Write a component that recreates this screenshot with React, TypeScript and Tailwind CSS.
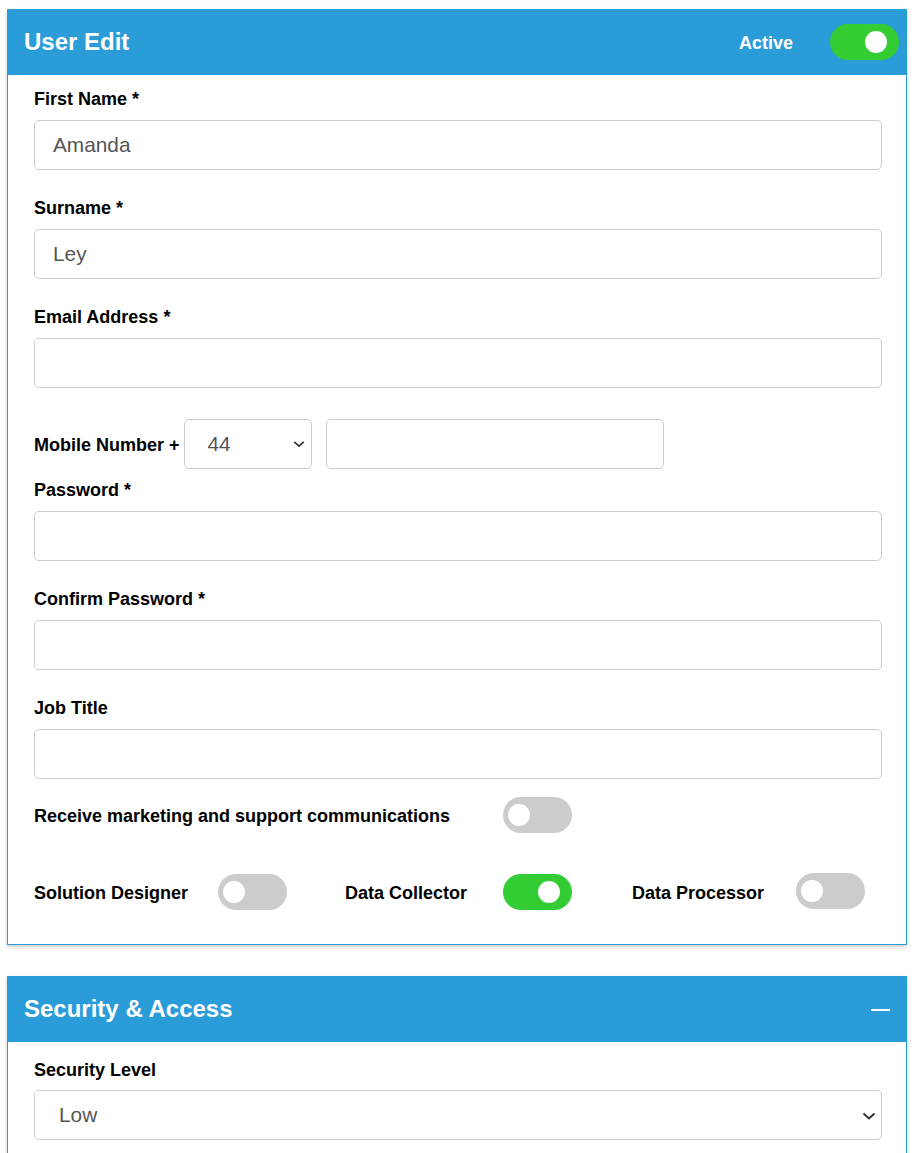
import { useState } from "react";

const font = { fontFamily: '"Liberation Sans", Arial, sans-serif' };

function Toggle({ on, onChange }: { on: boolean; onChange?: () => void }) {
  return (
    <button
      type="button"
      onClick={onChange}
      className={`relative shrink-0 w-[69px] h-[36px] rounded-full ${on ? "bg-[#33cc33]" : "bg-[#cccccc]"}`}
    >
      <span
        className={`absolute top-[7px] w-[22px] h-[22px] rounded-full bg-white ${on ? "left-[35px]" : "left-[5px]"}`}
      />
    </button>
  );
}

function Chevron({ w }: { w: number }) {
  return (
    <svg width={w} height={8} viewBox="0 0 14 8" fill="none" className="pointer-events-none">
      <path d="M1.5 1.5 L7 6.5 L12.5 1.5" stroke="#333" strokeWidth="2" />
    </svg>
  );
}

function Label({ children, className = "" }: { children: React.ReactNode; className?: string }) {
  return <label className={`block text-[18px] leading-[18px] font-bold text-black ${className}`}>{children}</label>;
}

function Field({ label, value = "", type = "text", mb = "mb-[28px]" }: { label: string; value?: string; type?: string; mb?: string }) {
  return (
    <div className={mb}>
      <Label className="pt-[1px] mb-[12px]">{label}</Label>
      <input
        type={type}
        defaultValue={value}
        className="block w-full h-[50px] border border-[#cccccc] rounded-[5px] px-[18px] text-[20.8px] text-[#555] outline-none"
      />
    </div>
  );
}

export default function App() {
  const [active, setActive] = useState(true);
  const [marketing, setMarketing] = useState(false);
  const [roles, setRoles] = useState({ designer: false, collector: true, processor: false });

  return (
    <div className="min-h-screen bg-white pt-[9px] pl-[7px] pb-[40px]" style={font}>
      {/* User edit panel */}
      <section className="w-[900px] shadow-[0_2px_4px_rgba(0,0,0,0.2)]">
        <div className="h-[66px] bg-[#2a9cd8] flex items-center justify-between pl-[17px] pr-[8px]">
          <h1 className="text-[24px] font-bold text-white">User Edit</h1>
          <div className="flex items-center gap-[37px]">
            <span className="text-[18px] font-bold text-white mt-[3px]">Active</span>
            <Toggle on={active} onChange={() => setActive(!active)} />
          </div>
        </div>

        <div className="border-x border-b border-[#2a9cd8] pl-[26px] pr-[24px] pt-[14px] pb-[34px]">
          <Field label="First Name *" value="Amanda" />
          <Field label="Surname *" value="Ley" />
          <Field label="Email Address *" type="email" mb="mb-[31px]" />

          {/* Mobile number */}
          <div className="flex items-center h-[50px] mb-[11px]">
            <Label className="mr-[4px] pt-[1px]">Mobile Number +</Label>
            <div className="relative w-[128px] h-[50px] mr-[14px]">
              <select
                defaultValue="44"
                className="appearance-none w-full h-full border border-[#cccccc] rounded-[5px] pl-[23px] text-[20.8px] text-[#555] bg-white outline-none"
              >
                <option>44</option>
                <option>1</option>
                <option>33</option>
              </select>
              <span className="absolute right-[7px] top-[21px] flex">
                <Chevron w={12} />
              </span>
            </div>
            <input className="w-[338px] h-[50px] border border-[#cccccc] rounded-[5px] px-[18px] text-[20.8px] text-[#555] outline-none" />
          </div>

          <Field label="Password *" type="password" />
          <Field label="Confirm Password *" type="password" />
          <Field label="Job Title" mb="mb-[18px]" />

          <div className="flex items-center h-[36px] mb-[41px]">
            <Label className="w-[469px] pt-[2px]">Receive marketing and support communications</Label>
            <Toggle on={marketing} onChange={() => setMarketing(!marketing)} />
          </div>

          <div className="flex items-center h-[36px]">
            <div className="w-[311px] flex items-center">
              <Label className="w-[184px] pt-[2px]">Solution Designer</Label>
              <Toggle on={roles.designer} onChange={() => setRoles({ ...roles, designer: !roles.designer })} />
            </div>
            <div className="w-[287px] flex items-center">
              <Label className="w-[158px] pt-[2px]">Data Collector</Label>
              <Toggle on={roles.collector} onChange={() => setRoles({ ...roles, collector: !roles.collector })} />
            </div>
            <div className="flex items-center">
              <Label className="w-[164px] pt-[2px]">Data Processor</Label>
              <div className="-mt-[2px] flex">
                <Toggle on={roles.processor} onChange={() => setRoles({ ...roles, processor: !roles.processor })} />
              </div>
            </div>
          </div>
        </div>
      </section>

      {/* Security panel */}
      <section className="w-[900px] mt-[31px] shadow-[0_2px_4px_rgba(0,0,0,0.2)]">
        <div className="h-[66px] bg-[#2a9cd8] flex items-center justify-between pl-[17px] pr-[17px]">
          <h2 className="text-[24px] font-bold text-white">Security &amp; Access</h2>
          <span className="block w-[19px] h-[2px] bg-white mt-[2px]" />
        </div>
        <div className="border-x border-b border-[#2a9cd8] pl-[26px] pr-[24px] pt-[18px] pb-[40px]">
          <Label className="pt-[1px] mb-[11px]">Security Level</Label>
          <div className="relative h-[50px]">
            <select
              defaultValue="Low"
              className="appearance-none w-full h-full border border-[#cccccc] rounded-[5px] pl-[24px] text-[20.8px] text-[#555] bg-white outline-none"
            >
              <option>Low</option>
              <option>Medium</option>
              <option>High</option>
            </select>
            <span className="absolute right-[6px] top-[22px] flex">
              <Chevron w={14} />
            </span>
          </div>
        </div>
      </section>
    </div>
  );
}
